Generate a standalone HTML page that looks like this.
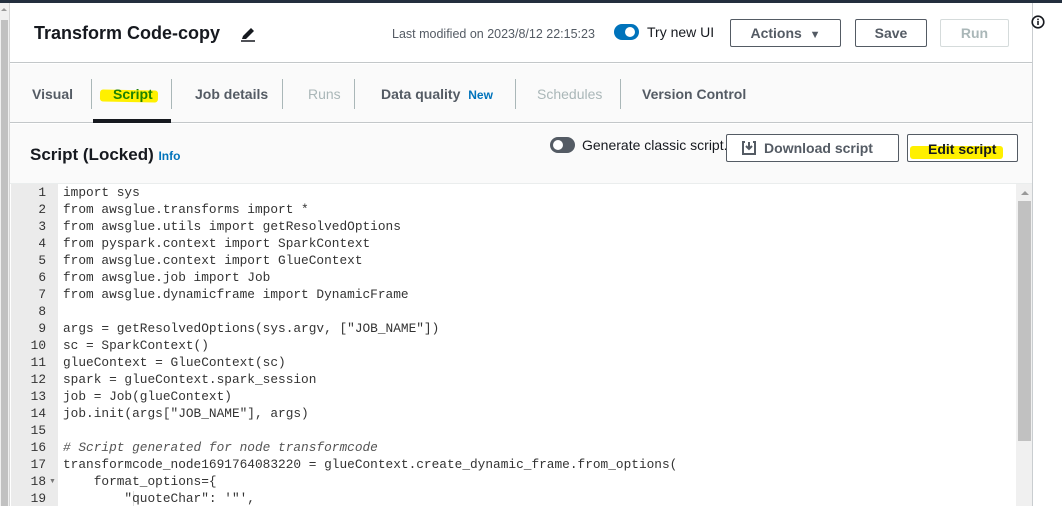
<!DOCTYPE html>
<html><head><meta charset="utf-8"><style>
*{margin:0;padding:0;box-sizing:border-box}
body{width:1062px;height:506px;overflow:hidden;background:#fff;font-family:"Liberation Sans",sans-serif;position:relative;color:#16191f}
.abs{position:absolute}
.top{left:0;top:0;width:1062px;height:3px;background:#232f3e}
.lsb{left:0;top:3px;width:10px;height:503px;background:#f0f0f0;border-right:1px solid #d5d5d5}
.lthumb{left:1px;top:20px;width:7px;height:486px;background:#c1c1c1}
.main{left:10px;top:3px;width:1023px;height:503px;border-right:1px solid #c9cdd0}
.hdr{left:10px;top:3px;width:1022px;height:60px;background:#fff;border-bottom:1px solid #c3c7c9}
.title{left:34px;top:23px;font-size:18px;font-weight:bold;color:#16191f}
.tabs{left:10px;top:64px;width:1022px;height:59px;background:#fafafa;border-bottom:1px solid #c3c7c9}
.tab{position:absolute;top:86px;font-size:14px;font-weight:bold;color:#545b64}
.sep{position:absolute;top:79px;width:1px;height:30px;background:#aab7b8}
.btn{position:absolute;border:1px solid #545b64;border-radius:2px;background:#fff;font-size:14px;font-weight:bold;color:#545b64;text-align:center}
.sh{left:10px;top:124px;width:1022px;height:60px;background:#fafafa;border-bottom:1px solid #eaeded}
.gut{left:11px;top:184px;width:47px;height:322px;background:#ebebeb}
.code{left:63px;top:184px;font-family:"Liberation Mono",monospace;font-size:12.8px;line-height:17px;color:#333;white-space:pre}
.nums{left:11px;top:184px;width:35px;font-family:"Liberation Mono",monospace;font-size:12.8px;line-height:17px;color:#333;text-align:right;white-space:pre}
.hl{background:#fff000}
</style></head><body>
<div class="abs top"></div>
<div class="abs lsb"></div><div class="abs lthumb"></div>
<div class="abs" style="left:1px;top:8px;width:0;height:0;border-left:3px solid transparent;border-right:3px solid transparent;border-bottom:3px solid #999"></div>
<div class="abs main"></div>
<div class="abs hdr"></div>
<div class="abs title">Transform Code-copy</div>
<svg class="abs" style="left:240px;top:26px" width="16" height="16" viewBox="0 0 16 16"><path d="M2 13 L3 10 L11 2 L14 5 L6 13 Z" fill="#16191f"/><path d="M1 15 H15" stroke="#16191f" stroke-width="1.5"/></svg>
<div class="abs" style="left:392px;top:27px;font-size:12.5px;color:#545b64">Last modified on 2023/8/12 22:15:23</div>
<div class="abs" style="left:614px;top:24px;width:25px;height:16px;border-radius:8px;background:#0073bb"></div>
<div class="abs" style="left:625px;top:27px;width:10px;height:10px;border-radius:5px;background:#fff"></div>
<div class="abs" style="left:647px;top:24px;font-size:14px;color:#16191f">Try new UI</div>
<div class="btn" style="left:730px;top:19px;width:111px;height:28px;line-height:26px">Actions &nbsp;<span style="font-size:11px">▼</span></div>
<div class="btn" style="left:855px;top:19px;width:72px;height:28px;line-height:26px">Save</div>
<div class="btn" style="left:940px;top:19px;width:69px;height:28px;line-height:26px;border-color:#d5dbdb;color:#aab7b8">Run</div>
<svg class="abs" style="left:1031px;top:15px" width="14" height="14" viewBox="0 0 14 14"><circle cx="7" cy="7" r="5.8" fill="none" stroke="#16191f" stroke-width="1.6"/><rect x="6.2" y="6" width="1.6" height="4" fill="#16191f"/><rect x="6.2" y="3.6" width="1.6" height="1.6" fill="#16191f"/></svg>

<div class="abs tabs"></div>
<div class="tab" style="left:32px">Visual</div>
<div class="sep" style="left:91px"></div>
<div class="abs hl" style="left:100px;top:90px;width:58px;height:12px;transform:rotate(1deg);border-radius:3px"></div>
<div class="tab" style="left:113px;color:#1d8102">Script</div>
<div class="abs" style="left:93px;top:119px;width:78px;height:4px;background:#16191f"></div>
<div class="sep" style="left:171px"></div>
<div class="tab" style="left:195px">Job details</div>
<div class="sep" style="left:282px"></div>
<div class="tab" style="left:308px;color:#aab7b8;font-weight:normal">Runs</div>
<div class="sep" style="left:354px"></div>
<div class="tab" style="left:381px">Data quality <span style="color:#0073bb;font-size:12px;margin-left:4px">New</span></div>
<div class="sep" style="left:515px"></div>
<div class="tab" style="left:537px;color:#aab7b8;font-weight:normal">Schedules</div>
<div class="sep" style="left:620px"></div>
<div class="tab" style="left:642px">Version Control</div>

<div class="abs sh"></div>
<div class="abs" style="left:30px;top:145px;font-size:17px;font-weight:bold">Script (Locked) <span style="color:#0073bb;font-size:12px">Info</span></div>
<div class="abs" style="left:550px;top:137px;width:25px;height:16px;border-radius:8px;background:#545b64"></div>
<div class="abs" style="left:553px;top:140px;width:10px;height:10px;border-radius:5px;background:#fff"></div>
<div class="abs" style="left:582px;top:137px;font-size:14px;color:#16191f">Generate classic script.</div>
<div class="btn" style="left:726px;top:134px;width:173px;height:28px;line-height:26px;padding-left:12px">Download script</div>
<svg class="abs" style="left:741px;top:140px" width="16" height="16" viewBox="0 0 16 16"><path d="M4 2 H2 V14 H14 V2 H12" fill="none" stroke="#545b64" stroke-width="2"/><path d="M8 2 V9 M5 6 L8 9 L11 6" fill="none" stroke="#545b64" stroke-width="2"/></svg>
<div class="btn" style="left:907px;top:134px;width:111px;height:28px"></div>
<div class="abs hl" style="left:910px;top:146px;width:93px;height:13px;border-radius:3px"></div>
<div class="abs" style="left:928px;top:141px;font-size:14px;font-weight:bold;color:#16191f">Edit script</div>

<div class="abs gut"></div>
<div class="abs" style="left:58px;top:184px;width:958px;height:322px;background:#fff"></div>
<div class="abs" style="left:1016px;top:184px;width:16px;height:322px;background:#f0f0f0"></div>
<div class="abs" style="left:1018px;top:201px;width:13px;height:240px;background:#c1c1c1"></div>
<div class="abs" style="left:1021px;top:191px;width:0;height:0;border-left:4px solid transparent;border-right:4px solid transparent;border-bottom:4px solid #999"></div>
<div class="abs nums">1
2
3
4
5
6
7
8
9
10
11
12
13
14
15
16
17
18
19</div>
<div class="abs" style="left:49px;top:478px;font-size:7px;color:#777">▼</div>
<div class="abs" style="left:133px;top:491px;width:1px;height:15px;background:#ddd"></div>
<div class="abs code">import sys
from awsglue.transforms import *
from awsglue.utils import getResolvedOptions
from pyspark.context import SparkContext
from awsglue.context import GlueContext
from awsglue.job import Job
from awsglue.dynamicframe import DynamicFrame

args = getResolvedOptions(sys.argv, ["JOB_NAME"])
sc = SparkContext()
glueContext = GlueContext(sc)
spark = glueContext.spark_session
job = Job(glueContext)
job.init(args["JOB_NAME"], args)

<i style="color:#555"># Script generated for node transformcode</i>
transformcode_node1691764083220 = glueContext.create_dynamic_frame.from_options(
    format_options={
        "quoteChar": '"',</div>
</body></html>
